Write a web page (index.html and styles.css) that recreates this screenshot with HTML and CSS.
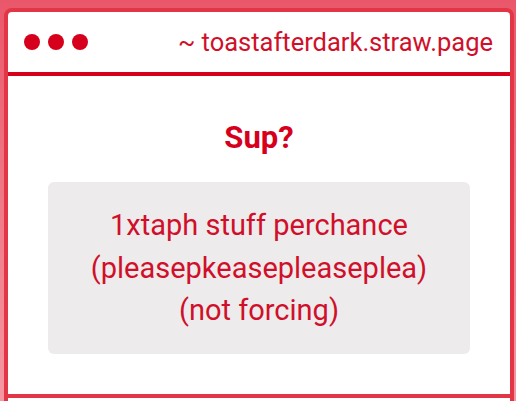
FILE: index.html
```html
<!DOCTYPE html>
<html>
<head>
<meta charset="utf-8">
<link rel="stylesheet" href="styles.css">
</head>
<body>
<div class="window">
  <div class="titlebar">
    <div class="dots"><span class="dot"></span><span class="dot"></span><span class="dot"></span></div>
    <div class="url">~ toastafterdark.straw.page</div>
  </div>
  <div class="content">
    <h1 class="title">Sup?</h1>
    <div class="note">
      <p>1xtaph stuff perchance<br>(pleasepkeasepleaseplea)<br>(not forcing)</p>
    </div>
  </div>
  <div class="footer"></div>
</div>
</body>
</html>
```
FILE: styles.css
```css
html, body {
  margin: 0;
  height: 100%;
}
body {
  background: linear-gradient(to bottom, #ea576a 0%, #ee7382 40%, #f598a3 100%);
  padding: 8px 2px 0 4px;
  box-sizing: border-box;
  font-family: Roboto, "Liberation Sans", sans-serif;
  overflow: hidden;
}
.window {
  background: #fff;
  border: 4px solid #e23546;
  border-bottom: none;
  border-radius: 8px 8px 0 0;
  height: 100%;
  box-sizing: border-box;
}
.titlebar {
  display: flex;
  align-items: center;
  justify-content: space-between;
  height: 60px;
  padding: 0 17px 0 16px;
  border-bottom: 4px solid #d6001c;
}
.dots {
  display: flex;
  gap: 8px;
}
.dot {
  width: 16px;
  height: 16px;
  border-radius: 50%;
  background: #d6001c;
}
.url {
  color: #d0102a;
  font-size: 25.5px;
  line-height: 30px;
}
.content {
  padding: 48px 40px 40px;
  border-bottom: 4px solid #e23546;
}
.title {
  margin: 0 0 30px;
  text-align: center;
  color: #d6001c;
  font-size: 31px;
  line-height: 28px;
  font-weight: 700;
}
.note {
  background: #edebec;
  border-radius: 6px;
  padding: 22px 16px;
  text-align: center;
}
.note p {
  margin: 0;
  color: #d0102a;
  font-size: 29px;
  line-height: 42.5px;
}
.footer {
  height: 10px;
}
```
